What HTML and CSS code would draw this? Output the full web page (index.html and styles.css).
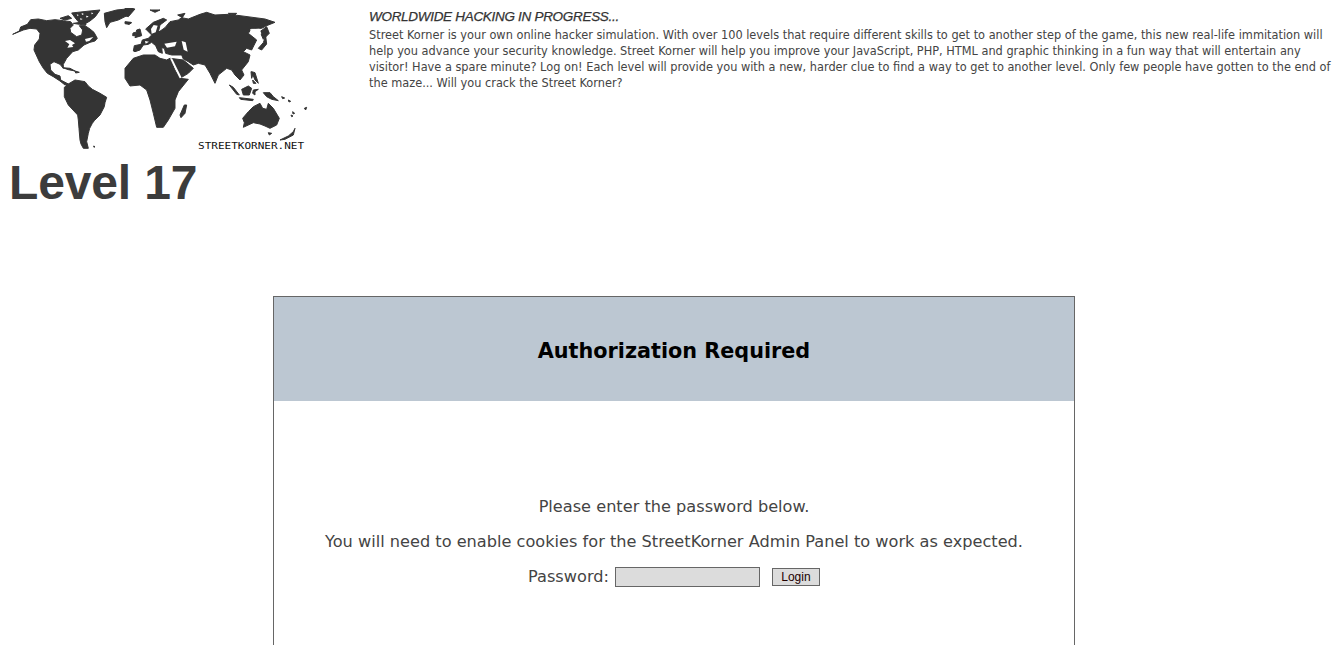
FILE: index.html
```html
<!DOCTYPE html>
<html lang="en">
<head>
<meta charset="utf-8">
<title>Level 17</title>
<link rel="stylesheet" href="styles.css">
</head>
<body>
<header class="top">
  <div class="brand">
    <svg class="map" width="300" height="147" viewBox="8 8 300 147" aria-label="World map">
      <g class="world">
        <g transform="translate(5 0) scale(.3333)" class="land">
          <path d="M178 262 190 252 210 240 228 243 240 245 250 258 262 268 285 280 305 292 300 308 298 320 285 345 268 362 262 370 254 385 250 400 245 425 250 445 235 445 228 432 225 420 222 385 220 360 218 345 204 330 190 315 178 290Z"/>
          <path d="M266 438 270 440 267 442Z"/>
        </g>
        <g transform="translate(10 5) scale(.3333)" class="land">
          <path d="M8 88 28 78 32 66 52 58 62 44 85 42 110 47 135 44 160 47 182 50 190 60 180 70 182 82 200 95 215 90 218 75 208 62 225 62 240 72 252 82 262 100 255 108 240 112 222 120 205 135 188 140 170 160 160 178 160 190 150 178 132 170 120 178 122 195 135 208 150 213 152 225 175 237 165 240 150 228 130 215 112 205 100 190 88 170 72 135 74 120 88 102 90 85 80 72 60 70 40 75Z"/>
          <path d="M150 40 175 32 185 40 165 45ZM185 24 240 18 270 15 256 35 240 48 226 56 205 50 195 38ZM190 55 225 50 228 60 208 58Z"/>
          <path d="M283 25 320 15 370 10 355 30 325 45 300 52 290 68 285 50ZM348 52 365 53 358 58Z"/>
          <path d="M158 188 180 190 195 198 175 194ZM195 198 208 202 197 204ZM235 95 245 92 240 100Z"/>
        </g>
        <g transform="translate(10 5) scale(.3333)" class="gap">
          <path d="M165 108 180 105 195 115 186 120 190 126 172 128 178 118ZM225 102 250 96 238 108 228 110Z"/>
          <path d="M200 28 206 30 203 34ZM215 24 222 27 216 30ZM228 32 236 34 230 38ZM210 40 218 42 212 45ZM245 22 250 26 244 28Z"/>
        </g>
        <g transform="translate(125 5) scale(.3333)" class="land">
          <path d="M0 190 25 160 55 150 90 150 105 160 125 165 135 160 150 195 165 220 190 223 160 260 150 285 150 310 130 345 115 367 95 367 85 325 75 285 65 255 45 240 15 243 0 220Z"/>
          <path d="M178 300 185 300 180 325 168 338 165 330Z"/>
          <path d="M135 160 175 165 205 190 190 205 165 220 160 205 145 175Z"/>
          <path d="M25 138 28 122 48 118 52 105 70 100 80 90 62 72 85 52 115 40 125 45 105 60 100 82 120 68 135 50 160 45 170 38 190 42 225 28 245 22 270 30 310 28 345 32 390 38 420 42 450 52 425 62 410 70 380 70 370 85 395 105 380 135 365 130 355 140 375 150 370 170 350 195 357 210 345 225 330 210 320 195 305 190 280 210 270 235 255 205 240 180 220 175 205 180 190 170 175 162 170 150 140 150 122 145 118 130 110 128 112 145 100 140 92 122 80 112 70 118 55 120 45 135 30 140Z"/>
          <path d="M35 75 45 72 50 92 30 98ZM24 84 32 82 30 92 23 92ZM75 15 105 15 90 22ZM158 30 180 25 172 38ZM0 10 30 12 10 35 0 32ZM310 25 335 25 330 30ZM0 50 18 52 12 58 0 56Z"/>
          <path d="M425 65 433 85 415 103 405 80ZM400 130 415 113 422 93 425 117 410 135ZM380 200 390 203 400 235 390 225Z"/>
        </g>
        <g transform="translate(125 5) scale(.3333)" class="gap">
          <path d="M118 116 155 110 150 124 126 128ZM170 108 182 112 188 140 176 134Z"/>
          <path d="M375 73 403 71 409 85 397 101 381 89Z"/>
          <path d="M86 60 98 62 92 82 80 86 78 72ZM60 108 72 110 62 116Z"/>
          <path d="M135 160 141 160 170 218 164 220Z"/>
        </g>
        <g transform="translate(210 50) scale(.3333)" class="land">
          <path d="M58 105 70 112 88 135 80 133ZM88 143 130 148 128 152 92 148ZM95 118 115 108 125 115 118 135 100 135Z"/>
          <path d="M123 65 130 70 125 85ZM128 90 138 100 130 100ZM130 120 145 118 135 125 135 135 128 130Z"/>
          <path d="M160 128 180 128 190 140 205 152 185 148 170 140Z"/>
          <path d="M98 205 115 185 130 170 150 160 158 175 170 178 175 160 190 175 208 205 200 225 180 235 165 228 150 222 130 218 100 232 103 218Z"/>
          <path d="M175 248 185 250 178 255ZM210 270 235 258 250 245 255 235 250 255 225 268Z"/>
          <path d="M215 140 224 144 218 146ZM235 150 242 154 237 156ZM248 185 254 190 249 192ZM243 195 249 198 245 200ZM283 175 290 172 287 180Z"/>
        </g>
      </g>
      <text x="198" y="149" class="map-label" textLength="106" lengthAdjust="spacingAndGlyphs">STREETKORNER.NET</text>
    </svg>
    <h1 class="level">Level 17</h1>
  </div>
  <div class="intro">
    <h2 class="intro-title">WORLDWIDE HACKING IN PROGRESS...</h2>
    <p class="intro-text">Street Korner is your own online hacker simulation. With over 100 levels that require different skills to get to another step of the game, this new real-life immitation will help you advance your security knowledge. Street Korner will help you improve your JavaScript, PHP, HTML and graphic thinking in a fun way that will entertain any visitor! Have a spare minute? Log on! Each level will provide you with a new, harder clue to find a way to get to another level. Only few people have gotten to the end of the maze... Will you crack the Street Korner?</p>
  </div>
</header>
<main class="panel">
  <div class="panel-head"><h2 class="panel-title">Authorization Required</h2></div>
  <form class="panel-body">
    <p class="line">Please enter the password below.</p>
    <p class="line">You will need to enable cookies for the StreetKorner Admin Panel to work as expected.</p>
    <p class="line login-row">
      <label for="pw">Password:</label>
      <input class="pw" id="pw" type="password">
      <button class="login" type="button">Login</button>
    </p>
  </form>
</main>
</body>
</html>
```
FILE: styles.css
```css
html { overflow: hidden; }
body {
  margin: 8px;
  background: #fff;
  color: #444;
  font-family: "DejaVu Sans", sans-serif;
}
.top { display: flex; }
.brand { width: 361px; flex: none; }
.map { display: block; }
.world { filter: blur(.35px); }
.land { fill: #343434; stroke: #343434; stroke-width: 3px; stroke-linejoin: round; }
.gap { fill: #fff; }
.map-label {
  font: 8px "DejaVu Sans Mono", monospace;
  fill: #111;
}
.level {
  margin: 0;
  padding-left: 1px;
  letter-spacing: -.15px;
  font: bold 48px/55px "Liberation Sans", sans-serif;
  color: #3c3c3c;
}
.intro { flex: none; width: 971px; }
.intro-title {
  margin: 0;
  padding-top: 1px;
  font: italic 13.5px/16px "Liberation Sans", sans-serif;
  letter-spacing: -.3px;
  color: #333;
  -webkit-text-stroke: .25px #333;
}
.intro-text {
  margin: 2px 0 0;
  font-family: "DejaVu Sans Condensed", "DejaVu Sans", sans-serif;
  font-size: 12.62px;
  line-height: 16px;
  color: #444;
}
.panel {
  width: 800px;
  height: 420px;
  margin: 86px 0 0 265px;
  border: 1px solid #666;
}
.panel-head {
  display: flex;
  align-items: center;
  justify-content: center;
  height: 104px;
  padding-top: 4px;
  box-sizing: border-box;
  background: #bcc7d2;
}
.panel-title {
  margin: 0;
  font: bold 20.75px "DejaVu Sans", sans-serif;
  color: #000;
}
.panel-body { padding-top: 96px; text-align: center; }
.line {
  margin: 0 0 15px;
  font-size: 16.16px;
  line-height: 20px;
}
.login-row {
  display: flex;
  align-items: center;
  justify-content: center;
}
.pw {
  box-sizing: border-box;
  width: 145px;
  height: 20px;
  margin: 0 12px 0 6px;
  border: 1px solid #666;
  background: #dcdcdc;
  padding: 0;
}
.login {
  box-sizing: border-box;
  width: 48px;
  height: 18px;
  padding: 0;
  border: 1px solid #666;
  background: #dcdcdc;
  color: #200;
  font: 12px "Liberation Sans", sans-serif;
}
```
